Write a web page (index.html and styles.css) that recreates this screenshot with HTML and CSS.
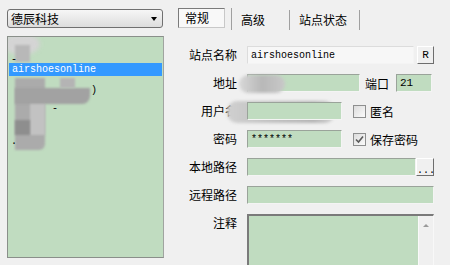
FILE: index.html
```html
<!DOCTYPE html>
<html lang="zh-CN">
<head>
    <meta charset="UTF-8">
    <title>站点管理</title>
    <link rel="stylesheet" href="styles.css">
</head>
<body>

    <div class="window">
        <div class="sites">
            <div class="combo">
                <span>德辰科技</span>
                <span class="combo-arrow"></span>
            </div>

            <div class="site-list">
                <div class="site-item"></div>
                <div class="site-item"></div>
                <div class="site-item selected">airshoesonline</div>
                <div class="site-item"></div>

                <!-- blurred entries -->
                <div class="blob blob-a"></div>
                <div class="blob blob-b"></div>
                <div class="blob blob-c"></div>
                <div class="blob blob-d"></div>
                <div class="blob blob-e"></div>
                <div class="blob blob-f"></div>
                <div class="blob blob-g"></div>
                <span class="mark mark-a">)</span>
                <span class="mark mark-b">-</span>
                <span class="mark mark-c">.</span>
                <span class="mark mark-d">-</span>
            </div>
        </div>

        <div class="props">
            <div class="tabs">
                <span class="tab tab-first"><span class="tab-box">常规</span></span>
                <span class="tab tab-adv">高级</span>
                <span class="tab tab-state">站点状态</span>
            </div>

            <div class="form">
                <label class="label">站点名称</label>
                <div class="field">
                    <input class="input input-plain input-grow" value="airshoesonline">
                    <button class="btn btn-r">R</button>
                </div>

                <label class="label">地址</label>
                <div class="field">
                    <input class="input input-grow" value="">
                    <span class="inline-label">端口</span>
                    <input class="input input-port" value="21">
                    <span class="blob blob-host"></span>
                </div>

                <label class="label label-blur">用户名<span class="blob blob-user"></span></label>
                <div class="field">
                    <input class="input input-short" value="">
                    <span class="check"></span>
                    <span class="check-text">匿名</span>
                </div>

                <label class="label">密码</label>
                <div class="field">
                    <input class="input input-short" value="*******">
                    <span class="check">
                        <svg width="9" height="9" viewBox="0 0 9 9"><path d="M1 4.5 L3.5 7 L8 1.5" fill="none" stroke="#5a5a5a" stroke-width="1.6"/></svg>
                    </span>
                    <span class="check-text">保存密码</span>
                </div>

                <label class="label">本地路径</label>
                <div class="field">
                    <input class="input input-grow" value="">
                    <button class="btn btn-dots">...</button>
                </div>

                <label class="label">远程路径</label>
                <div class="field">
                    <input class="input input-grow" value="">
                </div>

                <label class="label">注释</label>
                <div class="field">
                    <div class="memo">
                        <div class="memo-text"></div>
                        <div class="memo-scroll"><span class="scroll-up"></span></div>
                    </div>
                </div>
            </div>
        </div>
    </div>

</body>
</html>
```

FILE: styles.css
```css
body {
    margin: 0;
    background-color: #f0f0f0;
    font-family: "Noto Sans CJK SC", "Noto Sans", sans-serif;
    font-size: 12px;
    color: #000;
    overflow: hidden;
}

.window {
    display: flex;
    height: 265px;
    overflow: hidden;
}

/* left side: site tree */
.sites {
    width: 171px;
    padding: 9px 0 0 7px;
    box-sizing: border-box;
}

.combo {
    display: flex;
    align-items: center;
    justify-content: space-between;
    width: 156px;
    height: 19px;
    box-sizing: border-box;
    padding: 0 5px 0 3px;
    border: 1px solid #707070;
    border-radius: 3px;
    background: linear-gradient(#f6f6f6, #dddddd);
    line-height: 17px;
}

.combo-arrow {
    width: 0;
    height: 0;
    border-left: 3px solid transparent;
    border-right: 3px solid transparent;
    border-top: 4px solid #000;
}

.site-list {
    position: relative;
    margin-top: 8px;
    width: 157px;
    height: 222px;
    box-sizing: border-box;
    border: 1px solid #8a8f8a;
    border-right-color: #a0a4a0;
    background-color: #c0dcc0;
    overflow: hidden;
}

.site-item {
    height: 13px;
    margin: 0 1px;
    padding-left: 3px;
    line-height: 13px;
    font-family: "Liberation Mono", "DejaVu Sans Mono", monospace;
    font-size: 10px;
}

.site-item.selected {
    background-color: #3399ff;
    color: #fff;
}

.blob {
    position: absolute;
    background-color: #b0b0b0;
    filter: blur(1px);
}

.blob-a { left: -5px; top: -4px; width: 37px; height: 22px; border-radius: 50%; background-color: #d4d4d4; filter: blur(2px); }
.blob-b { left: 7px; top: 8px; width: 15px; height: 17px; background-color: #b8b8b8; }
.blob-c { left: 7px; top: 41px; width: 30px; height: 72px; background-color: #ababab; border-bottom-right-radius: 6px; }
.blob-d { left: 7px; top: 51px; width: 75px; height: 16px; background-color: #a2a2a2; border-bottom-right-radius: 8px; }
.blob-e { left: 52px; top: 41px; width: 15px; height: 10px; background-color: #b4b4b4; }
.blob-f { left: 22px; top: 67px; width: 15px; height: 31px; background-color: #c2c2c2; }
.blob-g { left: 7px; top: 83px; width: 15px; height: 15px; background-color: #8e8e8e; }

.mark {
    position: absolute;
    font-family: "Liberation Mono", monospace;
    font-size: 10px;
    line-height: 10px;
}

.mark-a { left: 83px; top: 49px; }
.mark-b { left: 44px; top: 67px; }
.mark-c { left: 3px; top: 100px; }
.mark-d { left: 3px; top: 18px; }

/* right side: properties */
.props {
    padding: 8px 0 0 7px;
}

.tabs {
    display: flex;
    height: 22px;
}

.tab {
    box-sizing: border-box;
    height: 20px;
    margin-top: 2px;
    padding-left: 9px;
    line-height: 20px;
    border-right: 1px solid #a0a0a0;
}

.tab-first {
    width: 54px;
    height: 22px;
    margin-top: 0;
    padding-left: 0;
}

.tab-box {
    display: block;
    width: 47px;
    height: 20px;
    box-sizing: border-box;
    padding-left: 6px;
    line-height: 18px;
    border: 1px solid #7a7a7a;
    border-right-color: #c8c8c8;
    border-bottom-color: #c8c8c8;
    background-color: #f8f8f8;
}

.tab-adv {
    width: 58px;
}

.tab-state {
    width: 70px;
}

.form {
    display: grid;
    grid-template-columns: 59px 187px;
    grid-auto-rows: 18px;
    column-gap: 10px;
    row-gap: 10px;
    margin-top: 16px;
}

.label {
    text-align: right;
    line-height: 18px;
    white-space: nowrap;
}

.label-blur {
    position: relative;
}

.field {
    display: flex;
    align-items: center;
    position: relative;
}

.input {
    height: 18px;
    box-sizing: border-box;
    margin: 0;
    padding: 0 3px;
    border: 1px solid;
    border-color: #9aa39a #f4f4f4 #f4f4f4 #9aa39a;
    background-color: #c0dcc0;
    font-family: "Liberation Mono", "DejaVu Sans Mono", monospace;
    font-size: 10px;
    color: #000;
    outline: none;
}

.input-grow {
    flex: 1;
    min-width: 0;
}

.input-plain {
    background-color: #f7f7f7;
    border-color: #dcdcdc #f4f4f4 #f4f4f4 #dcdcdc;
}

.input-port {
    width: 36px;
    margin-left: 7px;
    margin-right: 2px;
    font-size: 11px;
}

.inline-label {
    margin-left: 5px;
}

.input-short {
    width: 95px;
}

.check {
    display: flex;
    align-items: center;
    justify-content: center;
    width: 13px;
    height: 13px;
    box-sizing: border-box;
    margin-left: 11px;
    border: 1px solid #8e8f8f;
    background: linear-gradient(135deg, #dcdcdc, #fbfbfb);
}

.check-text {
    margin-left: 4px;
}

.btn {
    height: 18px;
    box-sizing: border-box;
    margin: 0;
    padding: 0;
    border: 1px solid;
    border-color: #ffffff #6e6e6e #6e6e6e #ffffff;
    background-color: #f0f0f0;
    color: #000;
    font-family: "Liberation Mono", "DejaVu Sans Mono", monospace;
    line-height: 14px;
}

.btn-r {
    width: 17px;
    margin-left: 3px;
    font-size: 11px;
}

.btn-dots {
    width: 18px;
    font-size: 10px;
    line-height: 16px;
    padding-top: 4px;
}

.blob-host {
    left: -8px;
    top: 1px;
    width: 46px;
    height: 18px;
    border-radius: 9px;
    background: linear-gradient(90deg, #d8d8d8, #b8b8b8 50%, #c8c8c8);
    filter: blur(1.5px);
}

.blob-user {
    left: 49px;
    top: -1px;
    width: 108px;
    height: 22px;
    border-radius: 10px;
    background: linear-gradient(90deg, #d0d0d0, #c0c0c0 40%, #b4b4b4 80%, #cfcfcf);
    filter: blur(1.5px);
}

.memo {
    display: flex;
    align-self: flex-start;
    width: 187px;
    height: 51px;
    box-sizing: border-box;
    border-top: 2px solid #7a7a7a;
    border-left: 2px solid #7a7a7a;
    border-right: 1px solid #f8f8f8;
}

.memo-text {
    flex: 1;
    background-color: #c0dcc0;
}

.memo-scroll {
    width: 15px;
    background-color: #f0f0f0;
    border-left: 1px solid #fafafa;
    display: flex;
    justify-content: center;
    padding-top: 8px;
    box-sizing: border-box;
}

.scroll-up {
    width: 0;
    height: 0;
    border-left: 3px solid transparent;
    border-right: 3px solid transparent;
    border-bottom: 3px solid #9a9a9a;
}
```
